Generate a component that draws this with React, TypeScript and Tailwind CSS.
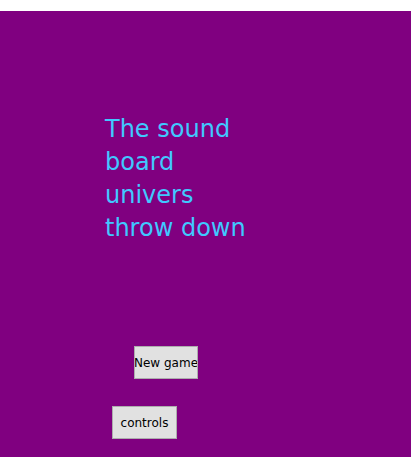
import React from "react";

export default function App() {
  return (
    <div
      className="w-[411px] h-[457px] bg-white pt-[11px] overflow-hidden"
      style={{ fontFamily: '"DejaVu Sans", Verdana, sans-serif' }}
    >
      <div className="h-[446px] bg-[#800080] flex flex-col">
        {/* Title */}
        <h1 className="ml-[105px] mt-[102px] w-[150px] text-[24px] leading-[33px] font-normal text-[#40c8ff]">
          The sound board univers throw down
        </h1>

        {/* Menu buttons */}
        <button className="ml-[134px] mt-[101px] w-[64px] h-[33px] flex items-center justify-center overflow-hidden whitespace-nowrap bg-[#e1e1e1] border border-[#adadad] text-[12px] text-black">
          New game
        </button>
        <button className="ml-[112px] mt-[27px] w-[65px] h-[33px] flex items-center justify-center overflow-hidden whitespace-nowrap bg-[#e1e1e1] border border-[#adadad] text-[12px] text-black">
          controls
        </button>
      </div>
    </div>
  );
}
